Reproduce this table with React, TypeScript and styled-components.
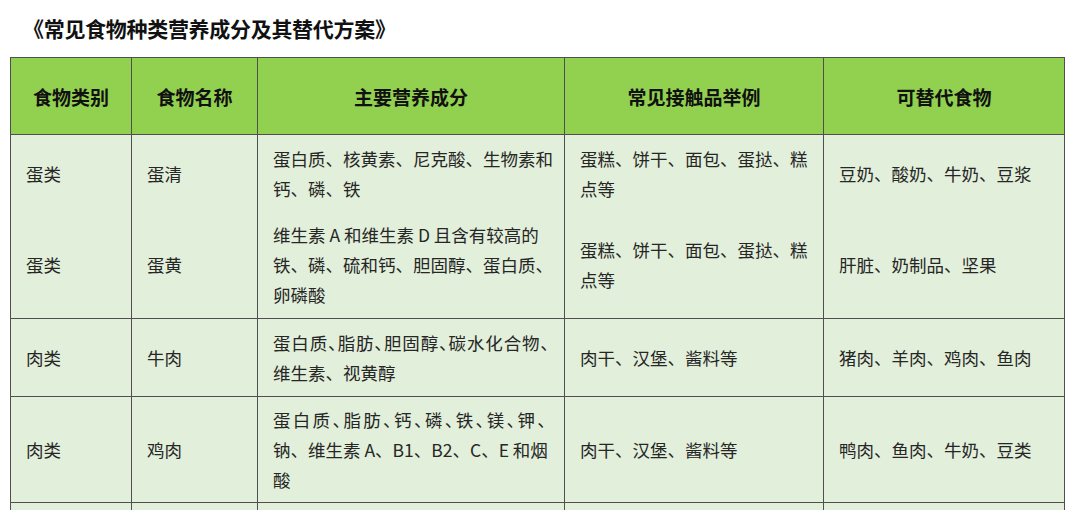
import React from "react";
import styled, { createGlobalStyle } from "styled-components";

const Global = createGlobalStyle`
  html, body { margin: 0; padding: 0; background: #ffffff; }
  body { font-family: "Noto Sans CJK SC", "Noto Sans", sans-serif; color: #222; }
`;

const Page = styled.div`
  width: 1080px;
  height: 510px;
  overflow: hidden;
  padding: 14px 0 0 10px;
  box-sizing: border-box;
`;

const Title = styled.h1`
  margin: 0 0 15px 13px;
  font-size: 21px;
  line-height: 28px;
  font-weight: 700;
  color: #111;
  letter-spacing: -0.3px;
  white-space: nowrap;
`;

const Table = styled.table`
  border-collapse: collapse;
  table-layout: fixed;
  width: 1054px;
`;

const HeadRow = styled.tr`
  background: #92d050;
  height: 77px;
`;

const HeadCell = styled.th`
  border: 1px solid #4f4f4f;
  font-size: 19px;
  font-weight: 700;
  color: #111;
  text-align: center;
  vertical-align: middle;
  padding: 0;
`;

const Row = styled.tr<{ $h: number; $openTop?: boolean; $openBottom?: boolean }>`
  background: #e2efda;
  height: ${(p) => p.$h}px;
  ${(p) => (p.$openTop ? "& > td { border-top: none; }" : "")}
  ${(p) => (p.$openBottom ? "& > td { border-bottom: none; }" : "")}
`;

const Cell = styled.td`
  border: 1px solid #4f4f4f;
  font-size: 17.5px;
  line-height: 30px;
  color: #262626;
  padding: 0 0 0 15px;
  vertical-align: middle;
  white-space: nowrap;
`;

const Line = styled.div<{ $ls?: number }>`
  ${(p) =>
    p.$ls !== undefined
      ? `font-feature-settings: "halt"; letter-spacing: ${p.$ls}px;`
      : ""}
`;

type RowData = {
  h: number;
  openTop?: boolean;
  openBottom?: boolean;
  cat: string;
  name: string;
  nutri: { t: string; ls?: number }[];
  ex: string[];
  alt: string;
};

const rows: RowData[] = [
  {
    h: 78,
    openBottom: true,
    cat: "蛋类",
    name: "蛋清",
    nutri: [{ t: "蛋白质、核黄素、尼克酸、生物素和" }, { t: "钙、磷、铁" }],
    ex: ["蛋糕、饼干、面包、蛋挞、糕", "点等"],
    alt: "豆奶、酸奶、牛奶、豆浆",
  },
  {
    h: 106,
    openTop: true,
    cat: "蛋类",
    name: "蛋黄",
    nutri: [
      { t: "维生素 A 和维生素 D 且含有较高的" },
      { t: "铁、磷、硫和钙、胆固醇、蛋白质、" },
      { t: "卵磷酸" },
    ],
    ex: ["蛋糕、饼干、面包、蛋挞、糕", "点等"],
    alt: "肝脏、奶制品、坚果",
  },
  {
    h: 78,
    cat: "肉类",
    name: "牛肉",
    nutri: [
      { t: "蛋白质、脂肪、胆固醇、碳水化合物、", ls: 0.85 },
      { t: "维生素、视黄醇" },
    ],
    ex: ["肉干、汉堡、酱料等"],
    alt: "猪肉、羊肉、鸡肉、鱼肉",
  },
  {
    h: 106,
    cat: "肉类",
    name: "鸡肉",
    nutri: [
      { t: "蛋白质、脂肪、钙、磷、铁、镁、钾、", ls: 2.3 },
      { t: "钠、维生素 A、B1、B2、C、E 和烟" },
      { t: "酸" },
    ],
    ex: ["肉干、汉堡、酱料等"],
    alt: "鸭肉、鱼肉、牛奶、豆类",
  },
];

export default function App() {
  return (
    <>
      <Global />
      <Page>
        <Title>《常见食物种类营养成分及其替代方案》</Title>
        <Table>
          <colgroup>
            <col style={{ width: 121 }} />
            <col style={{ width: 126 }} />
            <col style={{ width: 307 }} />
            <col style={{ width: 259 }} />
            <col style={{ width: 241 }} />
          </colgroup>
          <thead>
            <HeadRow>
              <HeadCell>食物类别</HeadCell>
              <HeadCell>食物名称</HeadCell>
              <HeadCell>主要营养成分</HeadCell>
              <HeadCell>常见接触品举例</HeadCell>
              <HeadCell>可替代食物</HeadCell>
            </HeadRow>
          </thead>
          <tbody>
            {rows.map((r, i) => (
              <Row
                key={i}
                $h={r.h}
                $openTop={r.openTop}
                $openBottom={r.openBottom}
              >
                <Cell>{r.cat}</Cell>
                <Cell>{r.name}</Cell>
                <Cell>
                  {r.nutri.map((l, j) => (
                    <Line key={j} $ls={l.ls}>
                      {l.t}
                    </Line>
                  ))}
                </Cell>
                <Cell>
                  {r.ex.map((l, j) => (
                    <Line key={j}>{l}</Line>
                  ))}
                </Cell>
                <Cell>{r.alt}</Cell>
              </Row>
            ))}
            <Row $h={40}>
              <Cell />
              <Cell />
              <Cell />
              <Cell />
              <Cell />
            </Row>
          </tbody>
        </Table>
      </Page>
    </>
  );
}
